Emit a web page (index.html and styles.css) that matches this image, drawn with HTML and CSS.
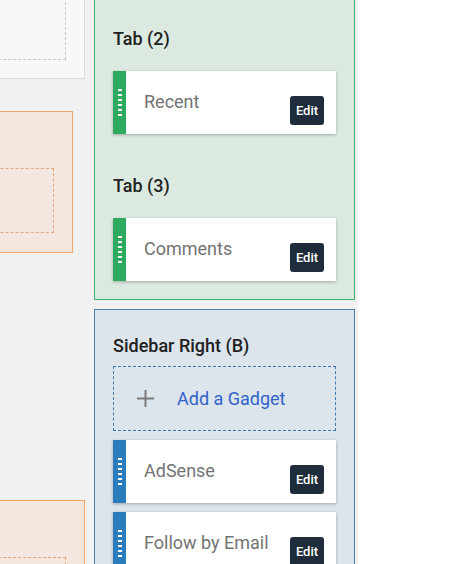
FILE: index.html
```html
<!DOCTYPE html>
<html lang="en">
<head>
<meta charset="utf-8">
<title>Layout</title>
<link rel="stylesheet" href="styles.css">
</head>
<body>
<div class="canvas">
  <div class="col-left">
    <div class="panel panel-grey"><div class="drop drop-grey"></div></div>
    <div class="panel panel-orange narrow"><div class="drop drop-orange"></div></div>
    <div class="panel panel-orange second"><div class="drop drop-orange"></div></div>
  </div>
  <div class="col-right">
    <section class="section section-green">
      <div class="tab">
        <h3 class="section-title">Tab (2)</h3>
        <div class="gadget">
          <div class="handle handle-green"><span class="grip"><i></i><i></i><i></i><i></i><i></i><i></i></span></div>
          <div class="gadget-name">Recent</div>
          <button class="edit">Edit</button>
        </div>
      </div>
      <div class="tab">
        <h3 class="section-title">Tab (3)</h3>
        <div class="gadget">
          <div class="handle handle-green"><span class="grip"><i></i><i></i><i></i><i></i><i></i><i></i></span></div>
          <div class="gadget-name">Comments</div>
          <button class="edit">Edit</button>
        </div>
      </div>
    </section>
    <section class="section section-blue">
      <h3 class="section-title">Sidebar Right (B)</h3>
      <div class="add-gadget">
        <svg class="plus" width="17" height="17" viewBox="0 0 17 17"><path d="M8.5 0v17M0 8.5h17" stroke="#7a7a7a" stroke-width="2" fill="none"/></svg>
        <span>Add a Gadget</span>
      </div>
      <div class="gadget">
        <div class="handle handle-blue"><span class="grip"><i></i><i></i><i></i><i></i><i></i><i></i></span></div>
        <div class="gadget-name">AdSense</div>
        <button class="edit">Edit</button>
      </div>
      <div class="gadget">
        <div class="handle handle-blue"><span class="grip"><i></i><i></i><i></i><i></i><i></i><i></i></span></div>
        <div class="gadget-name">Follow by Email</div>
        <button class="edit">Edit</button>
      </div>
    </section>
  </div>
</div>
</body>
</html>
```
FILE: styles.css
```css
* { box-sizing: border-box; }
html, body { margin: 0; background: #fff; overflow: hidden; }
body { font-family: Roboto, "Noto Sans", Arial, sans-serif; }

.canvas {
  display: flex;
  align-items: flex-start;
  gap: 9px;
  width: 358px;
  height: 564px;
  padding-right: 3px;
  background: #f1f1f1;
  overflow: hidden;
}

.col-left {
  flex: 0 0 240px;
  margin-left: -155px;
  display: flex;
  flex-direction: column;
}

.col-right {
  flex: 0 0 261px;
  display: flex;
  flex-direction: column;
  gap: 9px;
}

.panel {
  border: 1px solid;
  padding: 56px 18px 18px 18px;
}
.panel-grey { background: #f8f8f8; border-color: #dadada; margin-top: -80px; }
.panel-orange { background: #f4e7df; border-color: #efa565; }
.panel-orange.narrow { margin-top: 32px; margin-right: 12px; padding-bottom: 19px; }
.panel-orange.second { margin-top: 247px; }

.drop { border: 1px dashed; }
.drop-grey { border-color: #c6c6c6; height: 83px; }
.drop-orange { border-color: #e2a67c; height: 65px; }

.section { border: 1px solid; padding: 0 18px 18px 18px; }
.section-green { background: #dce9e0; border-color: #3db36b; margin-top: -30px; padding-top: 56px; }
.section-blue { background: #dce4ec; border-color: #4a7fb6; padding-top: 24px; }

.tab + .tab { margin-top: 40px; }

.section-title {
  margin: 0;
  font-size: 18px;
  line-height: 24px;
  font-weight: 500;
  color: #212121;
}
.tab .section-title { margin-bottom: 20px; }

.add-gadget {
  display: flex;
  align-items: center;
  gap: 23px;
  height: 65px;
  margin-top: 8px;
  padding-left: 23px;
  border: 1px dashed #3b78b6;
  color: #2f63c9;
  font-size: 18px;
  line-height: 24px;
}
.plus { flex: none; display: block; }

.gadget {
  display: flex;
  height: 63px;
  background: #fff;
  box-shadow: 0 1px 3px rgba(0, 0, 0, 0.28);
}
.section-blue .gadget { margin-top: 9px; }

.handle {
  flex: none;
  width: 13px;
  display: flex;
  align-items: center;
  padding-left: 5px;
}
.handle-green { background: #2eaa5f; }
.handle-blue { background: #2b7cbd; }

.grip { display: flex; flex-direction: column; gap: 3px; }
.grip i { display: block; width: 4px; height: 2px; background: #fff; }

.gadget-name {
  flex: 1;
  padding: 19px 0 0 18px;
  font-size: 18px;
  line-height: 24px;
  color: #737373;
  white-space: nowrap;
}

.edit {
  align-self: flex-end;
  flex: none;
  width: 34px;
  height: 29px;
  margin: 0 12px 9px 0;
  padding: 0;
  border: 0;
  border-radius: 3px;
  background: #1e2c3c;
  color: #fff;
  font-family: Roboto, "Noto Sans", Arial, sans-serif;
  font-size: 13px;
  font-weight: 500;
}
```
